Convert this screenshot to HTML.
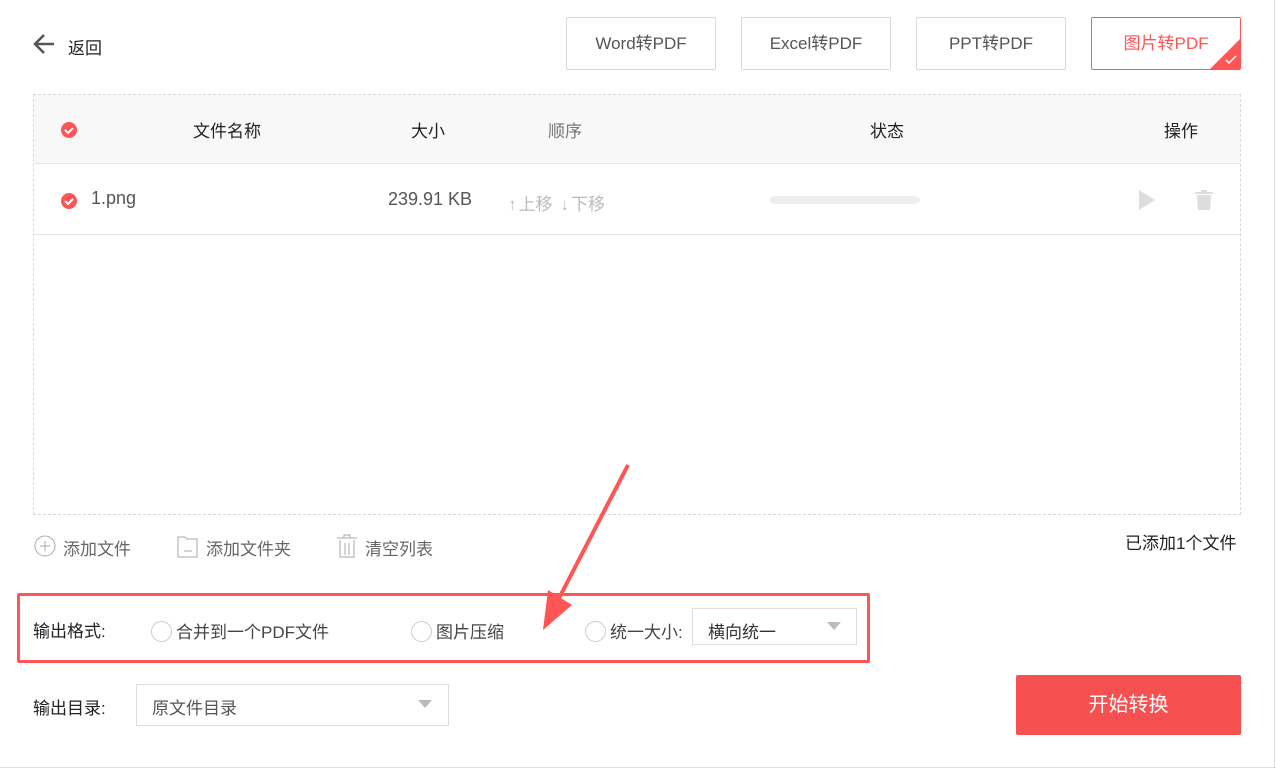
<!DOCTYPE html><html><head><meta charset="utf-8"><style>
*{margin:0;padding:0;box-sizing:border-box}
body{width:1276px;height:768px;background:#fff;position:relative;overflow:hidden;font-family:"Liberation Sans","Noto Sans CJK SC",sans-serif;color:#333}
.a{position:absolute;white-space:nowrap}
.btn{position:absolute;top:17px;height:53px;width:150px;border:1px solid #d8d8d8;border-radius:2px;text-align:center;line-height:51px;font-size:17px;color:#555}
.hd{font-size:17px;color:#222;top:117px}
.radio{display:inline-block;width:21px;height:21px;border:1px solid #ccc;border-radius:50%;vertical-align:-4px;margin-right:4px}
</style></head><body>
<div style="position:absolute;right:1px;top:0;width:1px;height:768px;background:#ddd"></div>
<div style="position:absolute;left:0;bottom:0;width:1276px;height:1px;background:#ddd"></div>
<svg class="a" style="left:32px;top:33px" width="24" height="22"><path d="M22 11H4M12 2L3 11l9 9" stroke="#555" stroke-width="2.6" fill="none"/></svg>
<div class="a" style="left:68px;top:34px;font-size:17px;color:#222">返回</div>
<div class="btn" style="left:566px">Word转PDF</div>
<div class="btn" style="left:741px">Excel转PDF</div>
<div class="btn" style="left:916px">PPT转PDF</div>
<div class="btn" style="left:1091px;border-color:#f55;color:#f55;overflow:hidden">图片转PDF
<div style="position:absolute;right:0;bottom:0;width:0;height:0;border-left:30px solid transparent;border-bottom:30px solid #f55"></div>
<svg style="position:absolute;right:3px;bottom:4px" width="12" height="10"><path d="M1 5l3 3 7-7" stroke="#fff" stroke-width="1.5" fill="none"/></svg></div>
<div style="position:absolute;left:33px;top:94px;width:1208px;height:421px;border:1px dashed #d8d8d8"></div>
<div style="position:absolute;left:34px;top:95px;width:1206px;height:69px;background:#f8f8f8;border-bottom:1px solid #e6e6e6"></div>
<div style="position:absolute;left:34px;top:234px;width:1206px;height:1px;background:#e6e6e6"></div>
<svg class="a" style="left:61px;top:122px" width="16" height="16"><circle cx="8" cy="8" r="8" fill="#f55"/><path d="M4 8l3 3 5-5" stroke="#fff" stroke-width="2" fill="none"/></svg>
<div class="a hd" style="left:193px">文件名称</div>
<div class="a hd" style="left:411px">大小</div>
<div class="a hd" style="left:548px;color:#777">顺序</div>
<div class="a hd" style="left:870px">状态</div>
<div class="a hd" style="left:1164px">操作</div>
<svg class="a" style="left:61px;top:193px" width="16" height="16"><circle cx="8" cy="8" r="8" fill="#f55"/><path d="M4 8l3 3 5-5" stroke="#fff" stroke-width="2" fill="none"/></svg>
<div class="a" style="left:91px;top:188px;font-size:18px;color:#555">1.png</div>
<div class="a" style="left:388px;top:189px;font-size:18px;color:#555">239.91 KB</div>
<div class="a" style="left:508px;top:190px;font-size:17px;color:#bbb"><span>↑</span><span style="margin-left:2px">上移</span><span style="margin-left:8px">↓</span><span style="margin-left:2px">下移</span></div>
<div style="position:absolute;left:770px;top:196px;width:150px;height:8px;border-radius:4px;background:#eee"></div>
<svg class="a" style="left:1137px;top:189px" width="20" height="22"><path d="M2 1l16 10L2 21z" fill="#ddd"/></svg>
<svg class="a" style="left:1193px;top:189px" width="22" height="22"><path d="M8 4V1h6v3M4 6h14l-1 15H5z" fill="#ddd"/><path d="M2 4h18" stroke="#ddd" stroke-width="2"/></svg>
<svg class="a" style="left:34px;top:535px" width="22" height="22"><circle cx="11" cy="11" r="10" stroke="#aaa" fill="none"/><path d="M11 6v10M6 11h10" stroke="#aaa"/></svg>
<div class="a" style="left:63px;top:535px;font-size:17px;color:#666">添加文件</div>
<svg class="a" style="left:177px;top:534px" width="22" height="24"><path d="M1 3h7l2 2h10v18H1z" stroke="#aaa" fill="none"/><path d="M7 17h8" stroke="#aaa"/></svg>
<div class="a" style="left:206px;top:535px;font-size:17px;color:#666">添加文件夹</div>
<svg class="a" style="left:336px;top:533px" width="22" height="26"><path d="M1 5h20M8 5V2h6v3M4 7v17h14V7M9 10v12M13 10v12" stroke="#aaa" fill="none"/></svg>
<div class="a" style="left:365px;top:535px;font-size:17px;color:#666">清空列表</div>
<div class="a" style="left:1125px;top:529px;font-size:17px;color:#222">已添加1个文件</div>
<div style="position:absolute;left:17px;top:593px;width:853px;height:70px;border:3px solid #f55;border-radius:2px"></div>
<div class="a" style="left:33px;top:617px;font-size:17px;color:#222">输出格式:</div>
<div class="a" style="left:151px;top:618px;font-size:17px;color:#444"><span class="radio"></span>合并到一个PDF文件</div>
<div class="a" style="left:411px;top:618px;font-size:17px;color:#444"><span class="radio"></span>图片压缩</div>
<div class="a" style="left:585px;top:618px;font-size:17px;color:#444"><span class="radio"></span>统一大小:</div>
<div style="position:absolute;left:692px;top:608px;width:165px;height:37px;border:1px solid #ddd"></div>
<div class="a" style="left:708px;top:618px;font-size:17px;color:#333">横向统一</div>
<div class="a" style="left:827px;top:622px;width:0;height:0;border-left:7px solid transparent;border-right:7px solid transparent;border-top:8px solid #bbb"></div>
<div class="a" style="left:33px;top:694px;font-size:17px;color:#222">输出目录:</div>
<div style="position:absolute;left:136px;top:684px;width:313px;height:42px;border:1px solid #ddd"></div>
<div class="a" style="left:152px;top:694px;font-size:17px;color:#555">原文件目录</div>
<div class="a" style="left:418px;top:700px;width:0;height:0;border-left:7px solid transparent;border-right:7px solid transparent;border-top:8px solid #bbb"></div>
<div style="position:absolute;left:1016px;top:675px;width:225px;height:60px;background:#f75050;border-radius:2px;color:#fff;font-size:20px;text-align:center;line-height:60px">开始转换</div>
<svg class="a" style="left:0;top:0" width="1276" height="768"><path d="M628 465L556 604" stroke="#f55" stroke-width="4"/><path d="M543 630L548 590L572 605z" fill="#f55"/></svg>
</body></html>
